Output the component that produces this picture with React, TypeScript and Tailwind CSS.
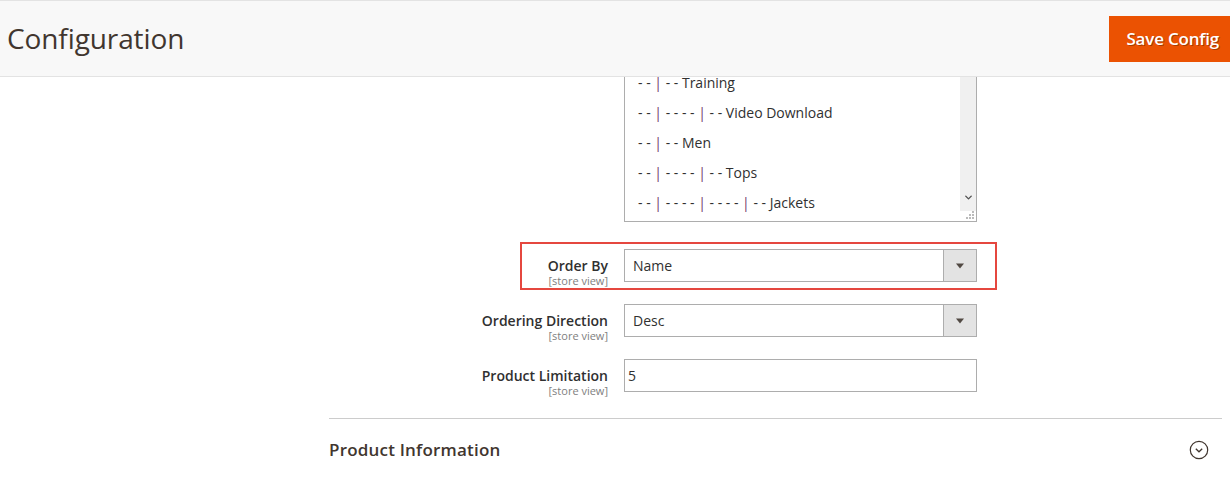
import { ChevronDown } from "lucide-react";

const categories: { parts: string[]; name: string }[] = [
  { parts: ["- -", "- -"], name: "Training" },
  { parts: ["- -", "- - - -", "- -"], name: "Video Download" },
  { parts: ["- -", "- -"], name: "Men" },
  { parts: ["- -", "- - - -", "- -"], name: "Tops" },
  { parts: ["- -", "- - - -", "- - - -", "- -"], name: "Jackets" },
];

function Label({ text }: { text: string }) {
  return (
    <div className="w-[279px] h-[33px] shrink-0 flex flex-col items-end pt-[7px]">
      <span className="text-[14px] leading-[19px] font-semibold text-[#303030] whitespace-nowrap">{text}</span>
      <span className="text-[11px] leading-[12px] text-[#808080] whitespace-nowrap">[store view]</span>
    </div>
  );
}

function SelectBox({ value }: { value: string }) {
  return (
    <div className="w-[353px] h-[33px] flex border border-[#adadad] bg-white">
      <div className="flex-1 flex items-center pl-[8px] text-[14px] text-[#303030]">{value}</div>
      <div className="w-[33px] flex items-center justify-center bg-[#e3e3e3] border-l border-[#adadad]">
        <svg width="10" height="6" viewBox="0 0 10 6">
          <path d="M1 0.5 H9 L5 5.5 Z" fill="#514943" />
        </svg>
      </div>
    </div>
  );
}

export default function App() {
  return (
    <div className="w-[1230px] h-[484px] bg-white overflow-hidden font-['Open_Sans',sans-serif] text-[#303030]">
      {/* Header */}
      <div className="h-[77px] bg-[#f8f8f8] border-t border-b border-[#e3e3e3] flex items-center justify-between pl-[7px] overflow-hidden">
        <h1 className="text-[28px] font-normal text-[#41362f] leading-none -mt-[2px] tracking-[-0.1px]">Configuration</h1>
        <button className="h-[46px] -mr-[7px] pl-[17px] pr-[18px] bg-[#eb5202] text-white text-[17px] font-semibold tracking-[-0.2px] [text-shadow:1px_1px_0_rgba(0,0,0,0.3)]">
          Save Config
        </button>
      </div>

      {/* Form */}
      <div className="ml-[329px] w-[893px]">
        {/* Category list (scrolled) */}
        <div className="flex">
          <div className="w-[279px] shrink-0" />
          <div className="ml-[16px] w-[353px] h-[145px] border-x border-b border-[#adadad] flex">
            <div className="flex-1 flex flex-col gap-[18px] pl-[13px]">
              {categories.map((c) => (
                <div key={c.name} className="h-[12px] leading-[12px] text-[14px] text-[#303030] whitespace-pre">
                  {c.parts.map((p, i) => (
                    <span key={i}>
                      {p}
                      {i < c.parts.length - 1 && <span className="text-[#6f3a6c]"> | </span>}
                    </span>
                  ))}
                  <span> {c.name}</span>
                </div>
              ))}
            </div>
            <div className="w-[16px] flex flex-col">
              <div className="h-[136px] bg-[#f0f0f0] flex items-end justify-center pb-[8px]">
                <ChevronDown size={11} strokeWidth={3} className="text-[#505050]" />
              </div>
              <div className="flex-1 flex items-end justify-end pr-[2px] pb-[2px]">
                <svg width="8" height="8" viewBox="0 0 8 8">
                  <rect x="6" y="0" width="2" height="2" fill="#bbb" />
                  <rect x="3" y="3" width="2" height="2" fill="#bbb" />
                  <rect x="6" y="3" width="2" height="2" fill="#bbb" />
                  <rect x="0" y="6" width="2" height="2" fill="#bbb" />
                  <rect x="3" y="6" width="2" height="2" fill="#bbb" />
                  <rect x="6" y="6" width="2" height="2" fill="#bbb" />
                </svg>
              </div>
            </div>
          </div>
        </div>

        {/* Order By */}
        <div className="relative flex h-[33px] mt-[27px]">
          <div className="absolute left-[191px] -top-[7px] w-[477px] h-[48px] border-2 border-[#e5473f]" />
          <Label text="Order By" />
          <div className="ml-[16px]">
            <SelectBox value="Name" />
          </div>
        </div>

        {/* Ordering Direction */}
        <div className="flex h-[33px] mt-[22px]">
          <Label text="Ordering Direction" />
          <div className="ml-[16px]">
            <SelectBox value="Desc" />
          </div>
        </div>

        {/* Product Limitation */}
        <div className="flex h-[33px] mt-[22px]">
          <Label text="Product Limitation" />
          <div className="ml-[16px] w-[353px] h-[33px] border border-[#adadad] flex items-center pl-[3px] text-[14px]">
            5
          </div>
        </div>

        <div className="mt-[26px] border-t border-[#cccccc]" />

        <div className="h-[62px] flex items-center justify-between">
          <span className="text-[17px] font-semibold text-[#41362f] tracking-[0.2px]">Product Information</span>
          <svg width="20" height="20" viewBox="0 0 20 20" className="mr-[13px]">
            <circle cx="10" cy="10" r="8.7" fill="none" stroke="#41362f" strokeWidth="1.2" />
            <path d="M6.8 8.8 L10 11.8 L13.2 8.8" fill="none" stroke="#41362f" strokeWidth="1.3" />
          </svg>
        </div>
      </div>
    </div>
  );
}
